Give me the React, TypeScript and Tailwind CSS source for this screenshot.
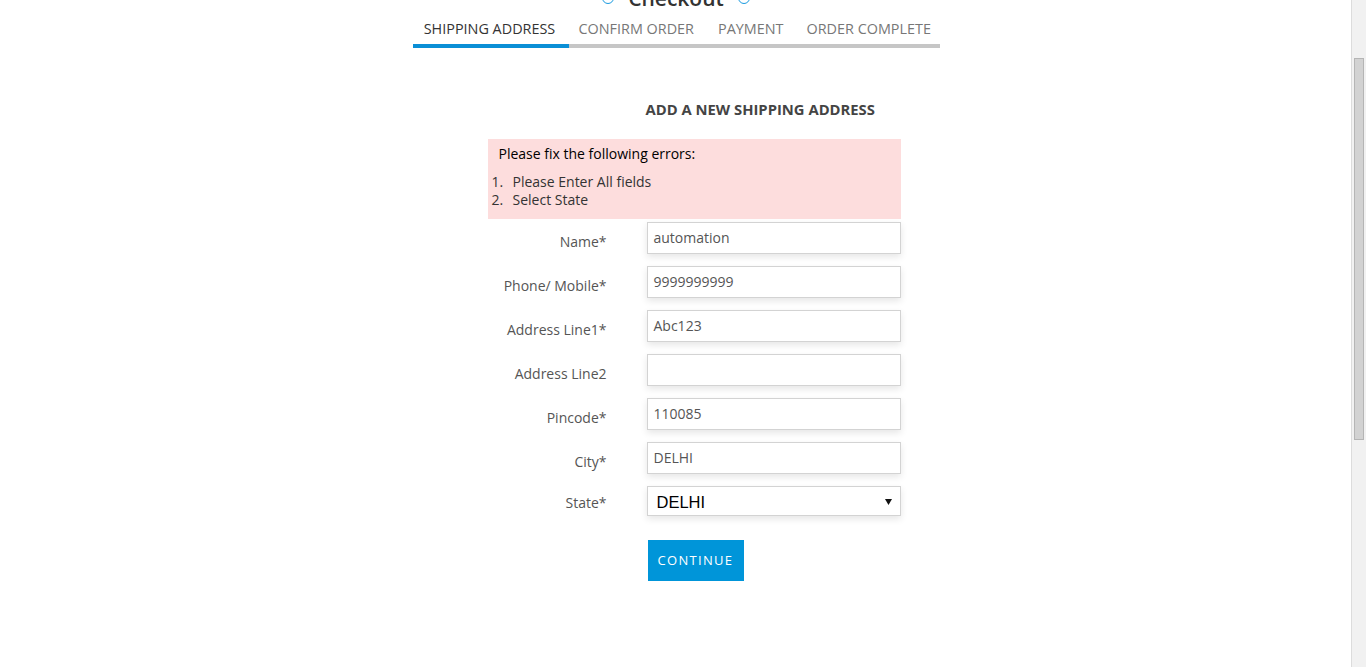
import React from "react";

const rows: { label: string; value: string }[] = [
  { label: "Name*", value: "automation" },
  { label: "Phone/ Mobile*", value: "9999999999" },
  { label: "Address Line1*", value: "Abc123" },
  { label: "Address Line2", value: "" },
  { label: "Pincode*", value: "110085" },
  { label: "City*", value: "DELHI" },
];

export default function App() {
  return (
    <div
      className="flex h-[667px] w-[1366px] overflow-hidden bg-white text-[#333]"
      style={{ fontFamily: '"Open Sans", "Liberation Sans", sans-serif' }}
    >
      <div className="flex-1 pl-[1px]">
        <div className="mx-auto w-[527px]">
          {/* title */}
          <div className="-mt-[17px] flex h-[30px] items-center justify-center gap-[14px]">
            <span className="h-[12px] w-[12px] rounded-full border-[1.5px] border-[#1b9be0]" />
            <span className="text-[21px] font-semibold leading-[30px] text-[#333]">Checkout</span>
            <span className="h-[12px] w-[12px] rounded-full border-[1.5px] border-[#1b9be0]" />
          </div>
          {/* tabs */}
          <div className="pt-[6px]">
            <div className="flex text-[14.4px] leading-[20px]">
              <div className="w-[156px] pr-[2px] text-center text-[#333]">SHIPPING ADDRESS</div>
              <div className="pl-[10px] pr-[12px] text-[#777]">CONFIRM ORDER</div>
              <div className="pl-[12px] pr-[11px] text-[#777]">PAYMENT</div>
              <div className="pl-[12px] text-[#777]">ORDER COMPLETE</div>
            </div>
            <div className="mt-[5px] flex h-[4px] bg-[#c6c6c6]">
              <div className="h-full w-[156px] bg-[#0a8fd6]" />
            </div>
          </div>
          {/* form */}
          <div className="ml-[75px] w-[413px]">
            <div className="mt-[51px] pl-[158px] text-[14.8px] font-bold leading-[20px] text-[#444]">
              ADD A NEW SHIPPING ADDRESS
            </div>
            <div className="mt-[20px] h-[80px] bg-[#fddddd] pt-[5px] text-[14px]">
              <div className="pl-[11px] leading-[20px] text-black">Please fix the following errors:</div>
              <div className="mt-[9px] pl-[4px] leading-[18px] text-[#333]">
                <div className="flex">
                  <span className="w-[21px]">1.</span>
                  <span>Please Enter All fields</span>
                </div>
                <div className="flex">
                  <span className="w-[21px]">2.</span>
                  <span>Select State</span>
                </div>
              </div>
            </div>
            <div className="mt-[3px] flex flex-col gap-[12px]">
              {rows.map((r) => (
                <div key={r.label} className="flex">
                  <div className="w-[119px] pt-[10px] text-right text-[14px] leading-[20px] text-[#555]">
                    {r.label}
                  </div>
                  <div className="ml-[40px] flex h-[32px] w-[254px] items-center border border-[#d3d3d3] bg-white pb-[1px] pl-[6px] text-[14px] text-[#555] shadow-[0_3px_7px_rgba(0,0,0,0.1)]">
                    {r.value}
                  </div>
                </div>
              ))}
              <div className="flex">
                <div className="w-[119px] pt-[7px] text-right text-[14px] leading-[20px] text-[#555]">
                  State*
                </div>
                <div
                  className="ml-[40px] flex h-[30px] w-[254px] items-center justify-between border border-[#d3d3d3] bg-white pl-[9px] pr-[8px] pt-[2px] text-[16.5px] text-black shadow-[0_3px_7px_rgba(0,0,0,0.1)]"
                  style={{ fontFamily: '"Liberation Sans", Arial, sans-serif' }}
                >
                  <span>DELHI</span>
                  <svg width="7" height="6" viewBox="0 0 7 6">
                    <path d="M0 0 L7 0 L3.5 6 Z" fill="#111" />
                  </svg>
                </div>
              </div>
            </div>
            <div className="mt-[24px] pl-[160px]">
              <div className="flex h-[41px] w-[96px] items-center justify-center bg-[#0095d9] text-[13px] tracking-[1.3px] text-white">
                CONTINUE
              </div>
            </div>
          </div>
        </div>
      </div>
      {/* scrollbar */}
      <div className="h-full w-[15px] border-l border-[#dcdcdc] bg-[#f1f1f1] pl-[2px] pt-[58px]">
        <div className="h-[382px] w-[10px] border border-[#b5b5b5] bg-[#d2d2d2]" />
      </div>
    </div>
  );
}
